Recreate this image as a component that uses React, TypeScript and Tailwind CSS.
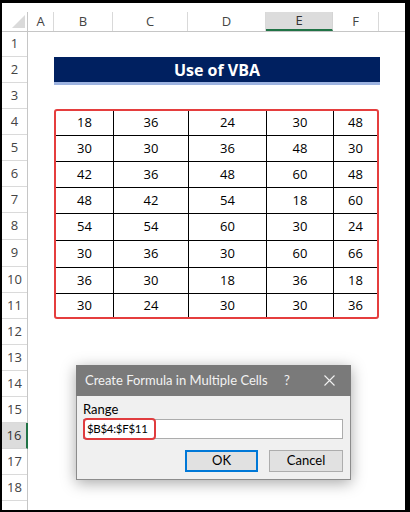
import React from "react";

const rows: { n: number; h: string; active?: boolean }[] = [
  { n: 1, h: "h-[25px]" },
  { n: 2, h: "h-[26px]" },
  { n: 3, h: "h-[26px]" },
  { n: 4, h: "h-[26px]" },
  { n: 5, h: "h-[26px]" },
  { n: 6, h: "h-[26px]" },
  { n: 7, h: "h-[26px]" },
  { n: 8, h: "h-[27px]" },
  { n: 9, h: "h-[27px]" },
  { n: 10, h: "h-[26px]" },
  { n: 11, h: "h-[26px]" },
  { n: 12, h: "h-[26px]" },
  { n: 13, h: "h-[26px]" },
  { n: 14, h: "h-[26px]" },
  { n: 15, h: "h-[26px]" },
  { n: 16, h: "h-[26px]", active: true },
  { n: 17, h: "h-[26px]" },
  { n: 18, h: "h-[26px]" },
];

const cols: { l: string; w: string; active?: boolean }[] = [
  { l: "A", w: "w-[26px]" },
  { l: "B", w: "w-[59px]" },
  { l: "C", w: "w-[75px]" },
  { l: "D", w: "w-[78px]" },
  { l: "E", w: "w-[67px]", active: true },
  { l: "F", w: "w-[46px]" },
];

const data = [
  [18, 36, 24, 30, 48],
  [30, 30, 36, 48, 30],
  [42, 36, 48, 60, 48],
  [48, 42, 54, 18, 60],
  [54, 54, 60, 30, 24],
  [30, 36, 30, 60, 66],
  [36, 30, 18, 36, 18],
  [30, 24, 30, 30, 36],
];

const cellFont = { fontFamily: '"Open Sans", "Noto Sans", sans-serif' };

export default function App() {
  return (
    <div className="w-[410px] h-[512px] bg-black pt-[3px] pl-[2px] pr-[5px] pb-[2px]">
      <div
        className="relative w-full h-full bg-white overflow-hidden flex flex-col"
        style={cellFont}
      >
        <div className="h-[9px] shrink-0" />
        {/* column header */}
        <div className="flex h-[20px] shrink-0 border-b border-[#c6c6c6]">
          <div className="w-[26px] border-r border-[#c6c6c6] relative">
            <svg className="absolute left-[10px] top-[3px]" width="13" height="13" viewBox="0 0 13 13">
              <polygon points="13,0 13,13 0,13" fill="#dadada" />
            </svg>
          </div>
          {cols.map((c) => (
            <div
              key={c.l}
              className={
                c.active
                  ? `${c.w} h-full flex items-center justify-center text-[13px] text-[#333] bg-[#dcdcdc] border-r border-[#d4d4d4] border-b-2 border-b-[#217346]`
                  : `${c.w} h-full flex items-center justify-center text-[13px] text-[#444] border-r border-[#d9d9d9]`
              }
            >
              {c.l}
            </div>
          ))}
          <div className="flex-1" />
        </div>
        {/* body */}
        <div className="flex flex-1 min-h-0">
          <div className="w-[26px] shrink-0 border-r border-[#c6c6c6] flex flex-col">
            {rows.map((r) => (
              <div
                key={r.n}
                className={
                  r.active
                    ? `${r.h} shrink-0 flex items-center justify-center text-[13px] text-[#333] bg-[#dcdcdc] border-b border-[#d4d4d4] border-r-2 border-r-[#217346] mr-[-1px]`
                    : `${r.h} shrink-0 flex items-center justify-center text-[13px] text-[#444] border-b border-[#dadada]`
                }
              >
                {r.n}
              </div>
            ))}
            <div className="flex-1" />
          </div>
          <div className="flex-1 flex flex-col">
            <div className="h-[25px] shrink-0" />
            <div className="ml-[26px] w-[326px] h-[28px] shrink-0 bg-[#002060] border-b-[3px] border-[#9db3e0] flex items-center justify-center text-white font-bold text-[16px]">
              Use of VBA
            </div>
            <div className="h-[24px] shrink-0" />
            <div className="ml-[26px] w-[325px] h-[210px] shrink-0 border-2 border-[#e53e3e] rounded-[3px] grid grid-cols-[58px_75px_78px_67px_43px] grid-rows-[25px_26px_26px_26px_27px_27px_26px_23px]">
              {data.map((row, ri) =>
                row.map((v, ci) => (
                  <div
                    key={`${ri}-${ci}`}
                    className={`flex items-center justify-center text-[13px] text-black ${
                      ri < 7 ? "border-b border-black" : ""
                    } ${ci < 4 ? "border-r border-black" : ""}`}
                  >
                    {v}
                  </div>
                ))
              )}
            </div>
          </div>
        </div>

        {/* dialog */}
        <div
          className="absolute left-[74px] top-[362px] w-[275px] h-[115px] bg-[#f0f0f0] border border-[#8c8c8c] shadow-[0_3px_14px_rgba(0,0,0,0.35)] flex flex-col"
          style={{ fontFamily: '"Lato", "Noto Sans", sans-serif' }}
        >
          <div className="h-[31px] shrink-0 bg-[#7a7a7a] flex items-center pl-[9px] pr-[16px] text-[#f2f2f2] text-[13px] mx-[-1px] mt-[-1px]">
            <span className="flex-1">Create Formula in Multiple Cells</span>
            <span className="w-[30px] text-[13px]">?</span>
            <svg width="11" height="11" viewBox="0 0 11 11" className="ml-[10px]">
              <path d="M0.5 0.5 L10.5 10.5 M10.5 0.5 L0.5 10.5" stroke="#f2f2f2" strokeWidth="1.1" />
            </svg>
          </div>
          <div className="flex flex-col pl-[6px] pr-[7px]">
            <div className="mt-[5px] h-[17px] leading-[17px] text-[13px] text-black">Range</div>
            <div className="mt-[1px] h-[20px] border border-[#acacac] bg-white relative">
              <div className="absolute left-[-1px] top-[-2px] w-[73px] h-[22px] border-2 border-[#e03c3e] rounded-[4px]" />
              <div className="pl-[3px] text-[11.5px] tracking-[-0.3px] leading-[18px] text-black">$B$4:$F$11</div>
            </div>
            <div className="mt-[11px] flex justify-end gap-[11px]">
              <div className="w-[73px] h-[22px] bg-[#e1e1e1] border-2 border-[#0078d7] flex items-center justify-center text-[13px] text-black">
                OK
              </div>
              <div className="w-[74px] h-[22px] bg-[#e1e1e1] border border-[#adadad] flex items-center justify-center text-[13px] text-black">
                Cancel
              </div>
            </div>
          </div>
        </div>
      </div>
    </div>
  );
}
